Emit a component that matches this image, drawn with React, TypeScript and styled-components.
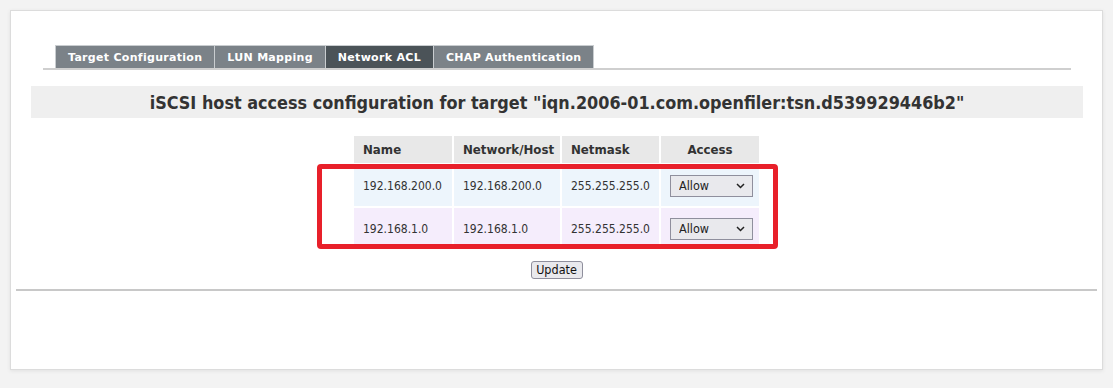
import React from "react";
import styled, { createGlobalStyle } from "styled-components";

const GlobalStyle = createGlobalStyle`
  html, body {
    margin: 0;
    padding: 0;
    background: #f3f3f3;
  }
  body {
    font-family: "DejaVu Sans Condensed", "DejaVu Sans", Verdana, sans-serif;
    font-stretch: condensed;
    color: #333;
  }
`;

const Page = styled.div`
  padding: 10px;
`;

const Panel = styled.div`
  box-sizing: border-box;
  width: 1093px;
  height: 360px;
  background: #fff;
  border: 1px solid #dcdcdc;
  box-shadow: 0 1px 4px rgba(0, 0, 0, 0.08);
  padding-top: 34px;
  display: flex;
  flex-direction: column;
`;

const TabBar = styled.div`
  margin: 0 31px 0 32px;
  padding-left: 12px;
  border-bottom: 2px solid #cfcfcf;
  display: flex;
`;

const Tab = styled.div<{ $active?: boolean }>`
  box-sizing: border-box;
  height: 23px;
  padding: 0 12px;
  display: flex;
  align-items: center;
  background: ${(p) => (p.$active ? "#4b5358" : "#7b8288")};
  color: #fff;
  font-family: "DejaVu Sans", Verdana, sans-serif;
  font-stretch: normal;
  font-weight: bold;
  font-size: 11px;
  letter-spacing: 0.3px;
  border: 1px solid #c9cdd0;
  border-bottom: none;
  margin-left: -1px;
  &:first-child {
    margin-left: 0;
  }
`;

const Heading = styled.h2`
  margin: 16px 19px 0 20px;
  height: 32px;
  background: #efefef;
  font-size: 17.85px;
  font-weight: bold;
  color: #333;
  display: flex;
  align-items: center;
  justify-content: center;
`;

const TableWrap = styled.div`
  position: relative;
  align-self: center;
  margin-top: 16px;
`;

const AclTable = styled.table`
  border-collapse: separate;
  border-spacing: 2px;
  table-layout: fixed;
  font-size: 12px;
`;

const HeadCell = styled.th<{ $center?: boolean; $w: number }>`
  box-sizing: border-box;
  width: ${(p) => p.$w}px;
  background: #e8e8e8;
  height: 27px;
  padding: 0 0 0 9px;
  padding-right: ${(p) => (p.$center ? "9px" : "0")};
  white-space: nowrap;
  text-align: ${(p) => (p.$center ? "center" : "left")};
  font-family: "DejaVu Sans", Verdana, sans-serif;
  font-stretch: normal;
  font-weight: bold;
  font-size: 11.8px;
  color: #333;
`;

const Row = styled.tr<{ $tint: string }>`
  background: ${(p) => p.$tint};
`;

const Cell = styled.td`
  box-sizing: border-box;
  height: 41px;
  padding: 0 0 0 9px;
  white-space: nowrap;
  color: #333;
`;

const Highlight = styled.div`
  position: absolute;
  top: 30px;
  left: -35px;
  right: -17px;
  bottom: 2px;
  border: 5px solid #e8202a;
  border-radius: 4px;
  pointer-events: none;
`;

const SelectWrap = styled.div`
  position: relative;
  width: 83px;
  height: 22px;
`;

const Select = styled.select`
  appearance: none;
  box-sizing: border-box;
  width: 83px;
  height: 22px;
  margin: 0;
  padding: 0 0 0 8px;
  background: #e9e9ed;
  border: 1px solid #8f8f9d;
  border-radius: 0;
  font-family: "DejaVu Sans Condensed", "DejaVu Sans", sans-serif;
  font-stretch: condensed;
  font-size: 12.5px;
  color: #222;
`;

const Chevron = styled.svg`
  position: absolute;
  right: 8px;
  top: 8px;
  pointer-events: none;
`;

const ButtonRow = styled.div`
  display: flex;
  justify-content: center;
  margin-top: 10px;
`;

const Button = styled.button`
  box-sizing: border-box;
  height: 18px;
  width: 52px;
  padding: 0;
  background: #e9e9ed;
  border: 1px solid #8f8f9d;
  border-radius: 3px;
  font-family: "DejaVu Sans Condensed", "DejaVu Sans", sans-serif;
  font-stretch: condensed;
  font-size: 12.5px;
  line-height: 16px;
  color: #111;
`;

const Rule = styled.div`
  margin: 10px 5px 0 5px;
  height: 2px;
  background: #c8c8c8;
`;

const rows = [
  { name: "192.168.200.0", net: "192.168.200.0", mask: "255.255.255.0", tint: "#edf5fc" },
  { name: "192.168.1.0", net: "192.168.1.0", mask: "255.255.255.0", tint: "#f5edfc" },
];

function AccessSelect() {
  return (
    <SelectWrap>
      <Select defaultValue="allow">
        <option value="allow">Allow</option>
        <option value="deny">Deny</option>
      </Select>
      <Chevron width="9" height="6" viewBox="0 0 9 6">
        <path d="M1 1 L4.5 4.5 L8 1" fill="none" stroke="#222" strokeWidth="1.5" />
      </Chevron>
    </SelectWrap>
  );
}

export default function App() {
  return (
    <>
      <GlobalStyle />
      <Page>
        <Panel>
          <TabBar>
            <Tab>Target Configuration</Tab>
            <Tab>LUN Mapping</Tab>
            <Tab $active>Network ACL</Tab>
            <Tab>CHAP Authentication</Tab>
          </TabBar>
          <Heading>
            iSCSI host access configuration for target "iqn.2006-01.com.openfiler:tsn.d539929446b2"
          </Heading>
          <TableWrap>
            <AclTable>
              <thead>
                <tr>
                  <HeadCell $w={98}>Name</HeadCell>
                  <HeadCell $w={106}>Network/Host</HeadCell>
                  <HeadCell $w={97}>Netmask</HeadCell>
                  <HeadCell $w={98} $center>Access</HeadCell>
                </tr>
              </thead>
              <tbody>
                {rows.map((r) => (
                  <Row key={r.name} $tint={r.tint}>
                    <Cell>{r.name}</Cell>
                    <Cell>{r.net}</Cell>
                    <Cell>{r.mask}</Cell>
                    <Cell>
                      <AccessSelect />
                    </Cell>
                  </Row>
                ))}
              </tbody>
            </AclTable>
            <Highlight />
          </TableWrap>
          <ButtonRow>
            <Button>Update</Button>
          </ButtonRow>
          <Rule />
        </Panel>
      </Page>
    </>
  );
}
